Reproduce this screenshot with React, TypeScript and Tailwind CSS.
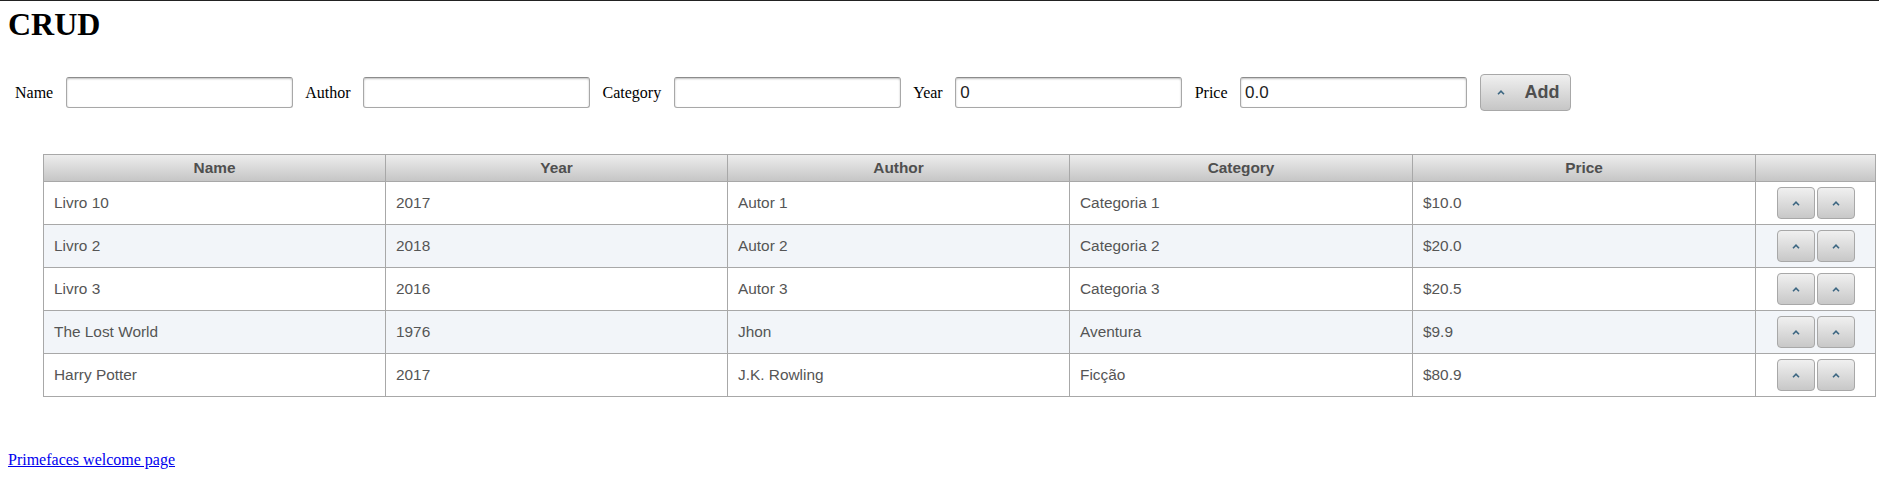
import React from 'react';

const books = [
  { name: 'Livro 10', year: '2017', author: 'Autor 1', category: 'Categoria 1', price: '$10.0' },
  { name: 'Livro 2', year: '2018', author: 'Autor 2', category: 'Categoria 2', price: '$20.0' },
  { name: 'Livro 3', year: '2016', author: 'Autor 3', category: 'Categoria 3', price: '$20.5' },
  { name: 'The Lost World', year: '1976', author: 'Jhon', category: 'Aventura', price: '$9.9' },
  { name: 'Harry Potter', year: '2017', author: 'J.K. Rowling', category: 'Ficção', price: '$80.9' },
];

const fields = [
  { label: 'Name', value: '' },
  { label: 'Author', value: '' },
  { label: 'Category', value: '' },
  { label: 'Year', value: '0' },
  { label: 'Price', value: '0.0' },
];

const Caret = () => (
  <svg width="8" height="5" viewBox="0 0 8 5" fill="none">
    <path d="M1 4.2 L4 1.2 L7 4.2" stroke="#3d6782" strokeWidth="1.6" />
  </svg>
);

const IconButton = () => (
  <button className="w-[38px] h-[32px] flex items-center justify-center rounded-[4px] border border-[#a8a8a8] bg-gradient-to-b from-[#f0f0f0] to-[#c8c8c8]">
    <Caret />
  </button>
);

export default function App() {
  return (
    <div className="min-h-[492px] bg-white border-t border-[#222] font-['Liberation_Serif',serif] text-black">
      {/* Title */}
      <h1 className="mt-[5px] ml-[8px] text-[32px] font-bold leading-[37px]">CRUD</h1>

      {/* Form */}
      <div className="mt-[31px] ml-[15px] flex items-center gap-[12.5px] text-[16px]">
        {fields.map((f) => (
          <React.Fragment key={f.label}>
            <label>{f.label}</label>
            <input
              defaultValue={f.value}
              className="w-[227px] h-[31px] px-[4px] rounded-[3px] border border-[#a8a8a8] border-t-[#8c8c8c] shadow-[inset_0_1px_2px_rgba(0,0,0,0.25)] bg-white font-['Liberation_Sans',sans-serif] text-[17px] text-[#222] outline-none"
            />
          </React.Fragment>
        ))}
        <button className="w-[91px] h-[37px] flex items-center rounded-[4px] border border-[#a8a8a8] bg-gradient-to-b from-[#f0f0f0] to-[#c6c6c6] font-['Liberation_Sans',sans-serif] text-[18px] font-bold text-[#4f4f4f]">
          <span className="ml-[16px] mr-[20px] flex"><Caret /></span>
          Add
        </button>
      </div>

      {/* Table */}
      <div className="mt-[43px] ml-[43px] w-[1832px]">
        <table className="w-full table-fixed border-collapse font-['Liberation_Sans',sans-serif] text-[15.4px] text-[#555]">
          <colgroup>
            <col className="w-[342px]" />
            <col className="w-[342px]" />
            <col className="w-[342px]" />
            <col className="w-[343px]" />
            <col className="w-[343px]" />
            <col className="w-[120px]" />
          </colgroup>
          <thead>
            <tr className="h-[27px] bg-gradient-to-b from-[#ededed] to-[#c4c4c4] text-[#4f4f4f]">
              {['Name', 'Year', 'Author', 'Category', 'Price', ''].map((h, i) => (
                <th key={i} className="border border-[#a8a8a8] font-bold text-center p-0">
                  {h}
                </th>
              ))}
            </tr>
          </thead>
          <tbody>
            {books.map((b, i) => (
              <tr key={b.name} className={`h-[43px] ${i % 2 === 1 ? 'bg-[#f2f5f9]' : 'bg-white'}`}>
                <td className="border border-[#a8a8a8] px-[10px]">{b.name}</td>
                <td className="border border-[#a8a8a8] px-[10px]">{b.year}</td>
                <td className="border border-[#a8a8a8] px-[10px]">{b.author}</td>
                <td className="border border-[#a8a8a8] px-[10px]">{b.category}</td>
                <td className="border border-[#a8a8a8] px-[10px]">{b.price}</td>
                <td className="border border-[#a8a8a8]">
                  <div className="flex justify-center gap-[2px]">
                    <IconButton />
                    <IconButton />
                  </div>
                </td>
              </tr>
            ))}
          </tbody>
        </table>
      </div>

      {/* Footer link */}
      <a href="#" className="block mt-[51px] ml-[8px] w-fit text-[16px] text-[#0000ee] underline">
        Primefaces welcome page
      </a>
    </div>
  );
}
